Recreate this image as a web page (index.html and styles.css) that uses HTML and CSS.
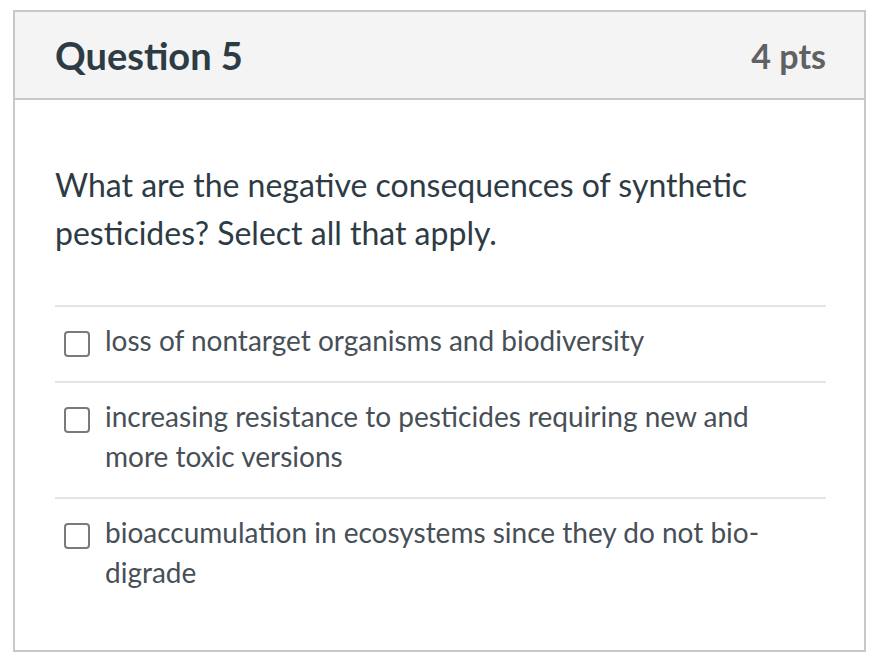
FILE: index.html
```html
<!DOCTYPE html>
<html>
<head>
<meta charset="utf-8">
<link rel="stylesheet" href="styles.css">
</head>
<body>
<div class="question">
  <div class="q-header">
    <h2 class="q-title">Question 5</h2>
    <span class="q-points">4 pts</span>
  </div>
  <div class="q-body">
    <p class="q-text">What are the negative consequences of synthetic pesticides? Select all that apply.</p>
    <div class="answers">
      <label class="answer"><span class="box"></span><span class="a-text">loss of nontarget organisms and biodiversity</span></label>
      <label class="answer"><span class="box"></span><span class="a-text">increasing resistance to pesticides requiring new and more toxic versions</span></label>
      <label class="answer"><span class="box"></span><span class="a-text">bioaccumulation in ecosystems since they do not bio-digrade</span></label>
    </div>
  </div>
</div>
</body>
</html>
```

FILE: styles.css
```css
html, body {
  margin: 0;
  padding: 0;
  background: #ffffff;
}
body {
  padding: 10px 0 0 13px;
  font-family: Lato, "Liberation Sans", sans-serif;
  color: #2d3b45;
}
.question {
  width: 849px;
  height: 638px;
  border: 2px solid #c8c8c8;
  display: flex;
  flex-direction: column;
}
.q-header {
  height: 86px;
  background: #f4f4f4;
  border-bottom: 2px solid #c8c8c8;
  display: flex;
  align-items: center;
  justify-content: space-between;
  padding: 0 38px 0 40px;
}
.q-title {
  margin: 0;
  font-size: 38px;
  font-weight: 700;
  color: #2d3b45;
}
.q-points {
  font-size: 34px;
  font-weight: 700;
  color: #5f6163;
}
.q-body {
  padding: 61px 38px 0 40px;
}
.q-text {
  margin: 0;
  font-size: 32px;
  line-height: 48px;
  color: #2d3b45;
  width: 720px;
}
.answers {
  margin-top: 48px;
  border-top: 2px solid #e4e4e4;
}
.answer {
  display: flex;
  align-items: flex-start;
  gap: 15px;
  padding: 13px 0 21px 9px;
  border-bottom: 2px solid #e4e4e4;
  font-size: 28px;
  line-height: 40px;
  color: #474f57;
}
.answer:last-child {
  border-bottom: none;
}
.box {
  flex: none;
  width: 22px;
  height: 22px;
  margin-top: 11px;
  border: 2px solid #7a7a7a;
  border-radius: 4px;
  background: #fff;
}
.a-text {
  width: 680px;
}
```
